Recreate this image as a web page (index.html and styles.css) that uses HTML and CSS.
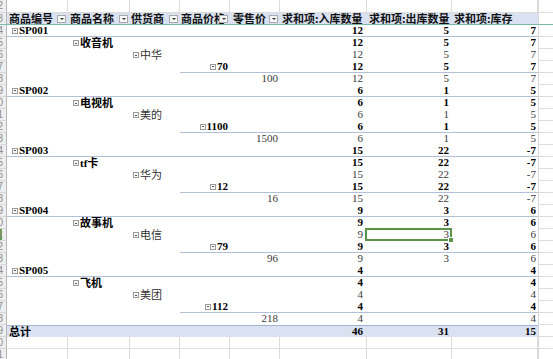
FILE: index.html
```html
<!DOCTYPE html>
<html>
<head>
<meta charset="utf-8">
<link rel="stylesheet" href="styles.css">
</head>
<body>
<div class="sheet">
  <div class="row top"><div class="rh"><span>2</span></div><div class="c g"></div><div class="c g"></div><div class="c g"></div><div class="c g"></div><div class="c g"></div><div class="c g"></div><div class="c g"></div><div class="c g"></div><div class="x"></div></div>

  <div class="row head"><div class="rh"><span>3</span></div>
    <div class="c hd">商品编号<i class="dd"></i></div>
    <div class="c hd hb">商品名称<i class="dd"></i></div>
    <div class="c hd hc">供货商<i class="dd"></i></div>
    <div class="c hd hc">商品价格<i class="dd"></i></div>
    <div class="c hd hd2">零售价<i class="dd"></i></div>
    <div class="c hd hv">求和项:入库数量</div>
    <div class="c hd hv">求和项:出库数量</div>
    <div class="c hd hv">求和项:库存</div>
    <div class="x"></div></div>

  <!-- SP001 -->
  <div class="row"><div class="rh"><span>4</span></div><div class="c l1 lab b"><i class="tog"></i>SP001</div><div class="c l1"></div><div class="c l1"></div><div class="c l1"></div><div class="c l1"></div><div class="c l1 v1 b">12</div><div class="c l1 v2 b">5</div><div class="c l1 v3 b">7</div><div class="x"></div></div>
  <div class="row"><div class="rh"><span>5</span></div><div class="c"></div><div class="c lab b"><i class="tog"></i>收音机</div><div class="c"></div><div class="c"></div><div class="c"></div><div class="c v1 b">12</div><div class="c v2 b">5</div><div class="c v3 b">7</div><div class="x"></div></div>
  <div class="row"><div class="rh"><span>6</span></div><div class="c"></div><div class="c"></div><div class="c lab lab3"><i class="tog"></i>中华</div><div class="c"></div><div class="c"></div><div class="c v1">12</div><div class="c v2">5</div><div class="c v3">7</div><div class="x"></div></div>
  <div class="row"><div class="rh"><span>7</span></div><div class="c"></div><div class="c"></div><div class="c"></div><div class="c l4 pr b"><i class="tog"></i>70</div><div class="c l4"></div><div class="c l4 v1 b">12</div><div class="c l4 v2 b">5</div><div class="c l4 v3 b">7</div><div class="x"></div></div>
  <div class="row"><div class="rh"><span>8</span></div><div class="c"></div><div class="c"></div><div class="c"></div><div class="c"></div><div class="c rt">100</div><div class="c v1">12</div><div class="c v2">5</div><div class="c v3">7</div><div class="x"></div></div>

  <!-- SP002 -->
  <div class="row"><div class="rh"><span>9</span></div><div class="c l1 lab b"><i class="tog"></i>SP002</div><div class="c l1"></div><div class="c l1"></div><div class="c l1"></div><div class="c l1"></div><div class="c l1 v1 b">6</div><div class="c l1 v2 b">1</div><div class="c l1 v3 b">5</div><div class="x"></div></div>
  <div class="row"><div class="rh"><span>10</span></div><div class="c"></div><div class="c lab b"><i class="tog"></i>电视机</div><div class="c"></div><div class="c"></div><div class="c"></div><div class="c v1 b">6</div><div class="c v2 b">1</div><div class="c v3 b">5</div><div class="x"></div></div>
  <div class="row"><div class="rh"><span>11</span></div><div class="c"></div><div class="c"></div><div class="c lab lab3"><i class="tog"></i>美的</div><div class="c"></div><div class="c"></div><div class="c v1">6</div><div class="c v2">1</div><div class="c v3">5</div><div class="x"></div></div>
  <div class="row"><div class="rh"><span>12</span></div><div class="c"></div><div class="c"></div><div class="c"></div><div class="c l4 pr b"><i class="tog"></i>1100</div><div class="c l4"></div><div class="c l4 v1 b">6</div><div class="c l4 v2 b">1</div><div class="c l4 v3 b">5</div><div class="x"></div></div>
  <div class="row"><div class="rh"><span>13</span></div><div class="c"></div><div class="c"></div><div class="c"></div><div class="c"></div><div class="c rt">1500</div><div class="c v1">6</div><div class="c v2">1</div><div class="c v3">5</div><div class="x"></div></div>

  <!-- SP003 -->
  <div class="row"><div class="rh"><span>14</span></div><div class="c l1 lab b"><i class="tog"></i>SP003</div><div class="c l1"></div><div class="c l1"></div><div class="c l1"></div><div class="c l1"></div><div class="c l1 v1 b">15</div><div class="c l1 v2 b">22</div><div class="c l1 v3 b">-7</div><div class="x"></div></div>
  <div class="row"><div class="rh"><span>15</span></div><div class="c"></div><div class="c lab b"><i class="tog"></i>tf卡</div><div class="c"></div><div class="c"></div><div class="c"></div><div class="c v1 b">15</div><div class="c v2 b">22</div><div class="c v3 b">-7</div><div class="x"></div></div>
  <div class="row"><div class="rh"><span>16</span></div><div class="c"></div><div class="c"></div><div class="c lab lab3"><i class="tog"></i>华为</div><div class="c"></div><div class="c"></div><div class="c v1">15</div><div class="c v2">22</div><div class="c v3">-7</div><div class="x"></div></div>
  <div class="row"><div class="rh"><span>17</span></div><div class="c"></div><div class="c"></div><div class="c"></div><div class="c l4 pr b"><i class="tog"></i>12</div><div class="c l4"></div><div class="c l4 v1 b">15</div><div class="c l4 v2 b">22</div><div class="c l4 v3 b">-7</div><div class="x"></div></div>
  <div class="row"><div class="rh"><span>18</span></div><div class="c"></div><div class="c"></div><div class="c"></div><div class="c"></div><div class="c rt">16</div><div class="c v1">15</div><div class="c v2">22</div><div class="c v3">-7</div><div class="x"></div></div>

  <!-- SP004 -->
  <div class="row"><div class="rh"><span>19</span></div><div class="c l1 lab b"><i class="tog"></i>SP004</div><div class="c l1"></div><div class="c l1"></div><div class="c l1"></div><div class="c l1"></div><div class="c l1 v1 b">9</div><div class="c l1 v2 b">3</div><div class="c l1 v3 b">6</div><div class="x"></div></div>
  <div class="row"><div class="rh"><span>20</span></div><div class="c"></div><div class="c lab b"><i class="tog"></i>故事机</div><div class="c"></div><div class="c"></div><div class="c"></div><div class="c v1 b">9</div><div class="c v2 b">3</div><div class="c v3 b">6</div><div class="x"></div></div>
  <div class="row"><div class="rh on"><span>21</span></div><div class="c"></div><div class="c"></div><div class="c lab lab3"><i class="tog"></i>电信</div><div class="c"></div><div class="c"></div><div class="c v1">9</div><div class="c v2 sel">3</div><div class="c v3">6</div><div class="x"></div></div>
  <div class="row"><div class="rh"><span>22</span></div><div class="c"></div><div class="c"></div><div class="c"></div><div class="c l4 pr b"><i class="tog"></i>79</div><div class="c l4"></div><div class="c l4 v1 b">9</div><div class="c l4 v2 b">3</div><div class="c l4 v3 b">6</div><div class="x"></div></div>
  <div class="row"><div class="rh"><span>23</span></div><div class="c"></div><div class="c"></div><div class="c"></div><div class="c"></div><div class="c rt">96</div><div class="c v1">9</div><div class="c v2">3</div><div class="c v3">6</div><div class="x"></div></div>

  <!-- SP005 -->
  <div class="row"><div class="rh"><span>24</span></div><div class="c l1 lab b"><i class="tog"></i>SP005</div><div class="c l1"></div><div class="c l1"></div><div class="c l1"></div><div class="c l1"></div><div class="c l1 v1 b">4</div><div class="c l1 v2 b"></div><div class="c l1 v3 b">4</div><div class="x"></div></div>
  <div class="row"><div class="rh"><span>25</span></div><div class="c"></div><div class="c lab b"><i class="tog"></i>飞机</div><div class="c"></div><div class="c"></div><div class="c"></div><div class="c v1 b">4</div><div class="c v2 b"></div><div class="c v3 b">4</div><div class="x"></div></div>
  <div class="row"><div class="rh"><span>26</span></div><div class="c"></div><div class="c"></div><div class="c lab lab3"><i class="tog"></i>美团</div><div class="c"></div><div class="c"></div><div class="c v1">4</div><div class="c v2"></div><div class="c v3">4</div><div class="x"></div></div>
  <div class="row"><div class="rh"><span>27</span></div><div class="c"></div><div class="c"></div><div class="c"></div><div class="c l4 pr b"><i class="tog"></i>112</div><div class="c l4"></div><div class="c l4 v1 b">4</div><div class="c l4 v2 b"></div><div class="c l4 v3 b">4</div><div class="x"></div></div>
  <div class="row"><div class="rh"><span>28</span></div><div class="c"></div><div class="c"></div><div class="c"></div><div class="c"></div><div class="c rt">218</div><div class="c v1">4</div><div class="c v2"></div><div class="c v3">4</div><div class="x"></div></div>

  <div class="row total"><div class="rh"><span>29</span></div><div class="c tt b tl">总计</div><div class="c tt"></div><div class="c tt"></div><div class="c tt"></div><div class="c tt"></div><div class="c tt v1 b">46</div><div class="c tt v2 b">31</div><div class="c tt v3 b">15</div><div class="x"></div></div>

  <div class="row"><div class="rh"><span>30</span></div><div class="c g"></div><div class="c g"></div><div class="c g"></div><div class="c g"></div><div class="c g"></div><div class="c g"></div><div class="c g"></div><div class="c g"></div><div class="x"></div></div>
  <div class="row"><div class="rh"><span>31</span></div><div class="c g"></div><div class="c g"></div><div class="c g"></div><div class="c g"></div><div class="c g"></div><div class="c g"></div><div class="c g"></div><div class="c g"></div><div class="x"></div></div>
</div>
</body>
</html>
```

FILE: styles.css
```css
* { box-sizing: border-box; margin: 0; padding: 0; }

body {
  background: #ffffff;
  font-family: "Liberation Serif", "Noto Sans CJK SC", serif;
  font-size: 11px;
  color: #3a3a3a;
  overflow: hidden;
}

.sheet { width: 553px; }

.row {
  display: grid;
  grid-template-columns: 7px 61px 62px 50px 50px 50px 87px 85px 86px 15px;
  height: 12px;
  line-height: 11px;
}
.row.top { height: 13px; }

.rh {
  background: #efefef;
  border-right: 1px solid #b8b8b8;
  border-bottom: 1px solid #d6d6d6;
  display: flex;
  justify-content: flex-end;
  overflow: hidden;
  color: #8c8c8c;
  font-family: "Liberation Sans", sans-serif;
  font-size: 10px;
  line-height: 11px;
}
.rh span { margin-right: 3px; white-space: nowrap; }
.rh.on { box-shadow: inset 2px 0 0 #5f9f45; }

.c {
  position: relative;
  white-space: nowrap;
  overflow: hidden;
  background: #ffffff;
}

.g { border-right: 1px solid #dcdcdc; border-bottom: 1px solid #dcdcdc; }
.x { border-left: 1px solid #d8d8d8; border-bottom: 1px solid #dcdcdc; }

.head .c, .head .rh, .head .x { border-bottom: 1px solid #78b9a7; }
.hd {
  background: #dae2f1;
  font-family: "Noto Sans CJK SC", sans-serif;
  font-weight: 700;
  color: #111;
  padding-left: 2px;
  font-size: 11px;
  line-height: 11px;
}
.hb { padding-left: 2px; }
.hc { padding-left: 1px; }
.hd2 { padding-left: 3px; }
.hv { padding-left: 2px; }

.dd {
  position: absolute;
  right: 2px;
  top: 2px;
  width: 9px;
  height: 8px;
  background: #f7f7f7;
  border: 1px solid #a9a9a9;
}
.dd::after {
  content: "";
  position: absolute;
  left: 2px;
  top: 2px;
  border-left: 2px solid transparent;
  border-right: 2px solid transparent;
  border-top: 2px solid #333;
}

.b { font-weight: 700; color: #000; }

.lab { padding-left: 5px; display: flex; align-items: center; }
.lab3 { padding-left: 3px; color: #333; }
.tog {
  display: inline-block;
  width: 6px;
  height: 6px;
  border: 1px solid #9a9a9a;
  background: #fafafa;
  margin-right: 1px;
  position: relative;
  flex: none;
}
.tog::after {
  content: "";
  position: absolute;
  left: 1px;
  top: 1.5px;
  width: 2px;
  height: 1px;
  background: #555;
}

.pr { text-align: right; padding-right: 2px; display: flex; justify-content: flex-end; align-items: center; }
.rt { text-align: right; padding-right: 2px; }

.v1 { text-align: right; padding-right: 4px; }
.v2 { text-align: right; padding-right: 3px; }
.v3 { text-align: right; padding-right: 2px; }

.l1 { border-bottom: 1px solid #b3c0da; }
.l4 { border-bottom: 1px solid #b3c0da; }

.tt { background: #dae2f1; border-top: 1px solid #a4b5d4; line-height: 10px; }
.tl { font-family: "Noto Sans CJK SC", sans-serif; padding-left: 2px; }

.sel { overflow: visible; }
.sel::after {
  content: "";
  position: absolute;
  left: -2px;
  top: -1px;
  right: 0;
  bottom: 0;
  border: 2px solid #5a9444;
  z-index: 2;
}
.sel::before {
  content: "";
  position: absolute;
  right: -2px;
  bottom: -2px;
  width: 4px;
  height: 4px;
  background: #5a9444;
  border: 1px solid #fff;
  z-index: 3;
}
```
